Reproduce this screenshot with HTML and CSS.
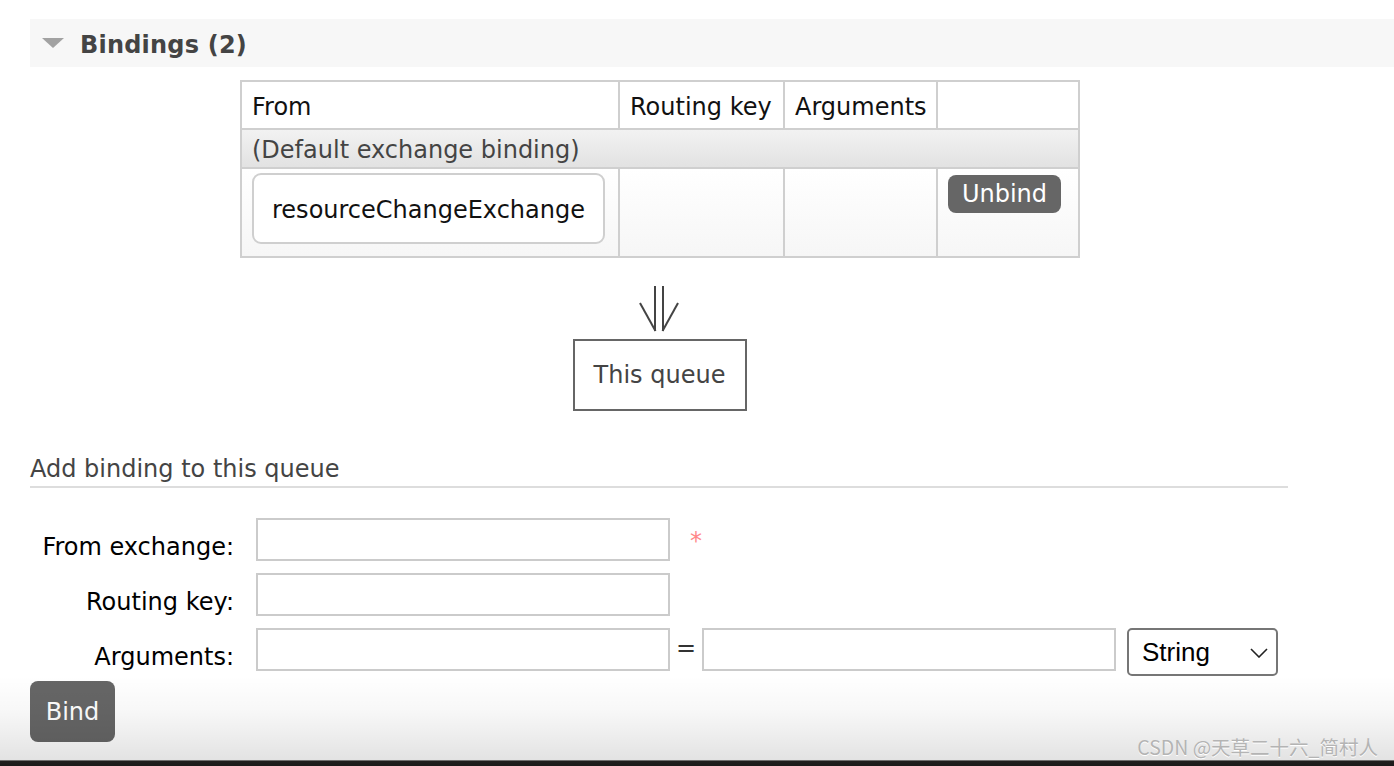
FILE: index.html
```html
<!DOCTYPE html>
<html>
<head>
<meta charset="utf-8">
<link rel="stylesheet" href="styles.css">
</head>
<body>
<div class="page">
  <div class="section-head">
    <span class="tri"></span>
    <h2 class="title">Bindings (2)</h2>
  </div>

  <div class="bindings">
    <table class="list">
      <thead>
        <tr>
          <th class="c1">From</th>
          <th class="c2">Routing key</th>
          <th class="c3">Arguments</th>
          <th class="c4"></th>
        </tr>
      </thead>
      <tbody>
        <tr class="default-row">
          <td colspan="4">(Default exchange binding)</td>
        </tr>
        <tr class="bind-row">
          <td><div class="exchange">resourceChangeExchange</div></td>
          <td></td>
          <td></td>
          <td><button class="btn unbind">Unbind</button></td>
        </tr>
      </tbody>
    </table>

    <div class="flow">
      <svg class="arrow" width="44" height="46" viewBox="0 0 44 46">
        <g fill="none" stroke="#444" stroke-width="2">
          <line x1="18" y1="0" x2="18" y2="45"/>
          <line x1="26" y1="0" x2="26" y2="45"/>
          <line x1="3" y1="17" x2="18.5" y2="45"/>
          <line x1="41" y1="17" x2="25.5" y2="45"/>
        </g>
      </svg>
      <div class="queue-box">This queue</div>
    </div>
  </div>

  <h3 class="sub">Add binding to this queue</h3>

  <form class="form">
    <label class="lbl">From exchange:</label>
    <div class="field"><input class="inp" type="text"><span class="req">*</span></div>
    <label class="lbl">Routing key:</label>
    <div class="field"><input class="inp" type="text"></div>
    <label class="lbl">Arguments:</label>
    <div class="field">
      <input class="inp" type="text"><span class="eq">=</span><input class="inp" type="text">
      <div class="select">String
        <svg class="chev" width="18" height="10" viewBox="0 0 18 10"><polyline points="1,1 9,9 17,1" fill="none" stroke="#222" stroke-width="1.6"/></svg>
      </div>
    </div>
  </form>
  <button class="btn bind">Bind</button>

  <div class="shade"></div>
  <div class="watermark">CSDN @天草二十六_简村人</div>
</div>
</body>
</html>
```

FILE: styles.css
```css
* { box-sizing: border-box; }
html, body { margin: 0; padding: 0; background: #fff; }
body {
  font-family: "DejaVu Sans", Verdana, sans-serif;
  font-size: 24px;
  color: #000;
}
.page {
  position: relative;
  width: 1394px;
  height: 766px;
  overflow: hidden;
  padding-top: 19px;
}
.section-head {
  margin-left: 30px;
  height: 48px;
  background: #f7f7f7;
  display: flex;
  align-items: center;
}
.tri {
  width: 0;
  height: 0;
  margin-left: 12px;
  margin-right: 16px;
  margin-top: 0;
  border-left: 11px solid transparent;
  border-right: 11px solid transparent;
  border-top: 10px solid #a2a2a2;
}
.title {
  margin: 4px 0 0 0;
  font-size: 24px;
  font-weight: bold;
  color: #444;
  letter-spacing: 0.2px;
}
.bindings {
  margin-left: 240px;
  margin-top: 13px;
  width: 838px;
}
.list {
  border-collapse: collapse;
  width: 838px;
  table-layout: fixed;
}
.list th, .list td {
  border: 2px solid #cfcfcf;
  padding: 0 0 0 10px;
  text-align: left;
  font-weight: normal;
  vertical-align: middle;
}
.list th { height: 48px; color: #111; padding-top: 4px; }
.c1 { width: 378px; }
.c2 { width: 165px; }
.c3 { width: 153px; }
.c4 { width: 142px; }
.default-row td {
  height: 39px;
  padding-top: 2px;
  color: #444;
  background: linear-gradient(#f2f2f2, #e2e2e2);
}
.bind-row td {
  height: 89px;
  vertical-align: top;
  padding-top: 4px;
  background: linear-gradient(#ffffff, #f6f6f6);
}
.exchange {
  width: 353px;
  height: 71px;
  padding-top: 3px;
  border: 2px solid #cfcfcf;
  border-radius: 9px;
  background: #fff;
  display: flex;
  align-items: center;
  justify-content: center;
  color: #111;
}
.btn {
  font-family: "DejaVu Sans", Verdana, sans-serif;
  font-size: 24px;
  color: #fff;
  background: #666;
  border: none;
  border-radius: 8px;
  padding: 0;
}
.unbind {
  margin-top: 2px;
  width: 113px;
  height: 38px;
}
.flow {
  display: flex;
  flex-direction: column;
  align-items: center;
  padding-top: 28px;
}
.arrow { display: block; margin-left: 0; }
.queue-box {
  margin-top: 7px;
  margin-left: 1px;
  width: 174px;
  height: 72px;
  border: 2px solid #666;
  display: flex;
  align-items: center;
  justify-content: center;
  color: #444;
}
.sub {
  margin: 44px 106px 0 30px;
  font-size: 24px;
  font-weight: normal;
  color: #444;
  padding-bottom: 2px;
  border-bottom: 2px solid #dddddd;
  line-height: 29px;
}
.form {
  margin-top: 30px;
  display: grid;
  grid-template-columns: 234px auto;
  column-gap: 22px;
  row-gap: 12px;
}
.lbl {
  text-align: right;
  padding-top: 15px;
  line-height: 28px;
}
.field {
  display: flex;
  align-items: flex-start;
}
.inp {
  width: 414px;
  height: 43px;
  border: 2px solid #cbcbcb;
  background: #fff;
  margin: 0;
  font-size: 22px;
}
.req {
  color: #f88;
  margin-left: 20px;
  margin-top: 9px;
  font-size: 24px;
}
.eq {
  width: 32px;
  text-align: center;
  color: #333;
  margin-top: 6px;
}
.select {
  margin-left: 11px;
  width: 151px;
  height: 48px;
  border: 2px solid #767676;
  border-radius: 5px;
  font-family: "Liberation Sans", Arial, sans-serif;
  font-size: 26px;
  padding-left: 13px;
  display: flex;
  align-items: center;
  position: relative;
}
.chev { position: absolute; right: 8px; top: 18px; }
.bind {
  margin: 5px 0 0 30px;
  width: 85px;
  height: 61px;
}
.shade {
  position: absolute;
  left: 0;
  right: 0;
  bottom: 0;
  height: 90px;
  background: linear-gradient(rgba(0,0,0,0) 0%, rgba(0,0,0,0.03) 40%, rgba(0,0,0,0.11) 93%, #211d1d 94.5%, #1c1a1a 100%);
  pointer-events: none;
}
.watermark {
  position: absolute;
  right: 16px;
  bottom: 8px;
  font-family: "Noto Sans CJK SC", "DejaVu Sans", sans-serif;
  font-size: 19.5px;
  color: #b4b4b4;
  text-shadow: 0 1px 0 #fff;
  line-height: 22px;
}
```
